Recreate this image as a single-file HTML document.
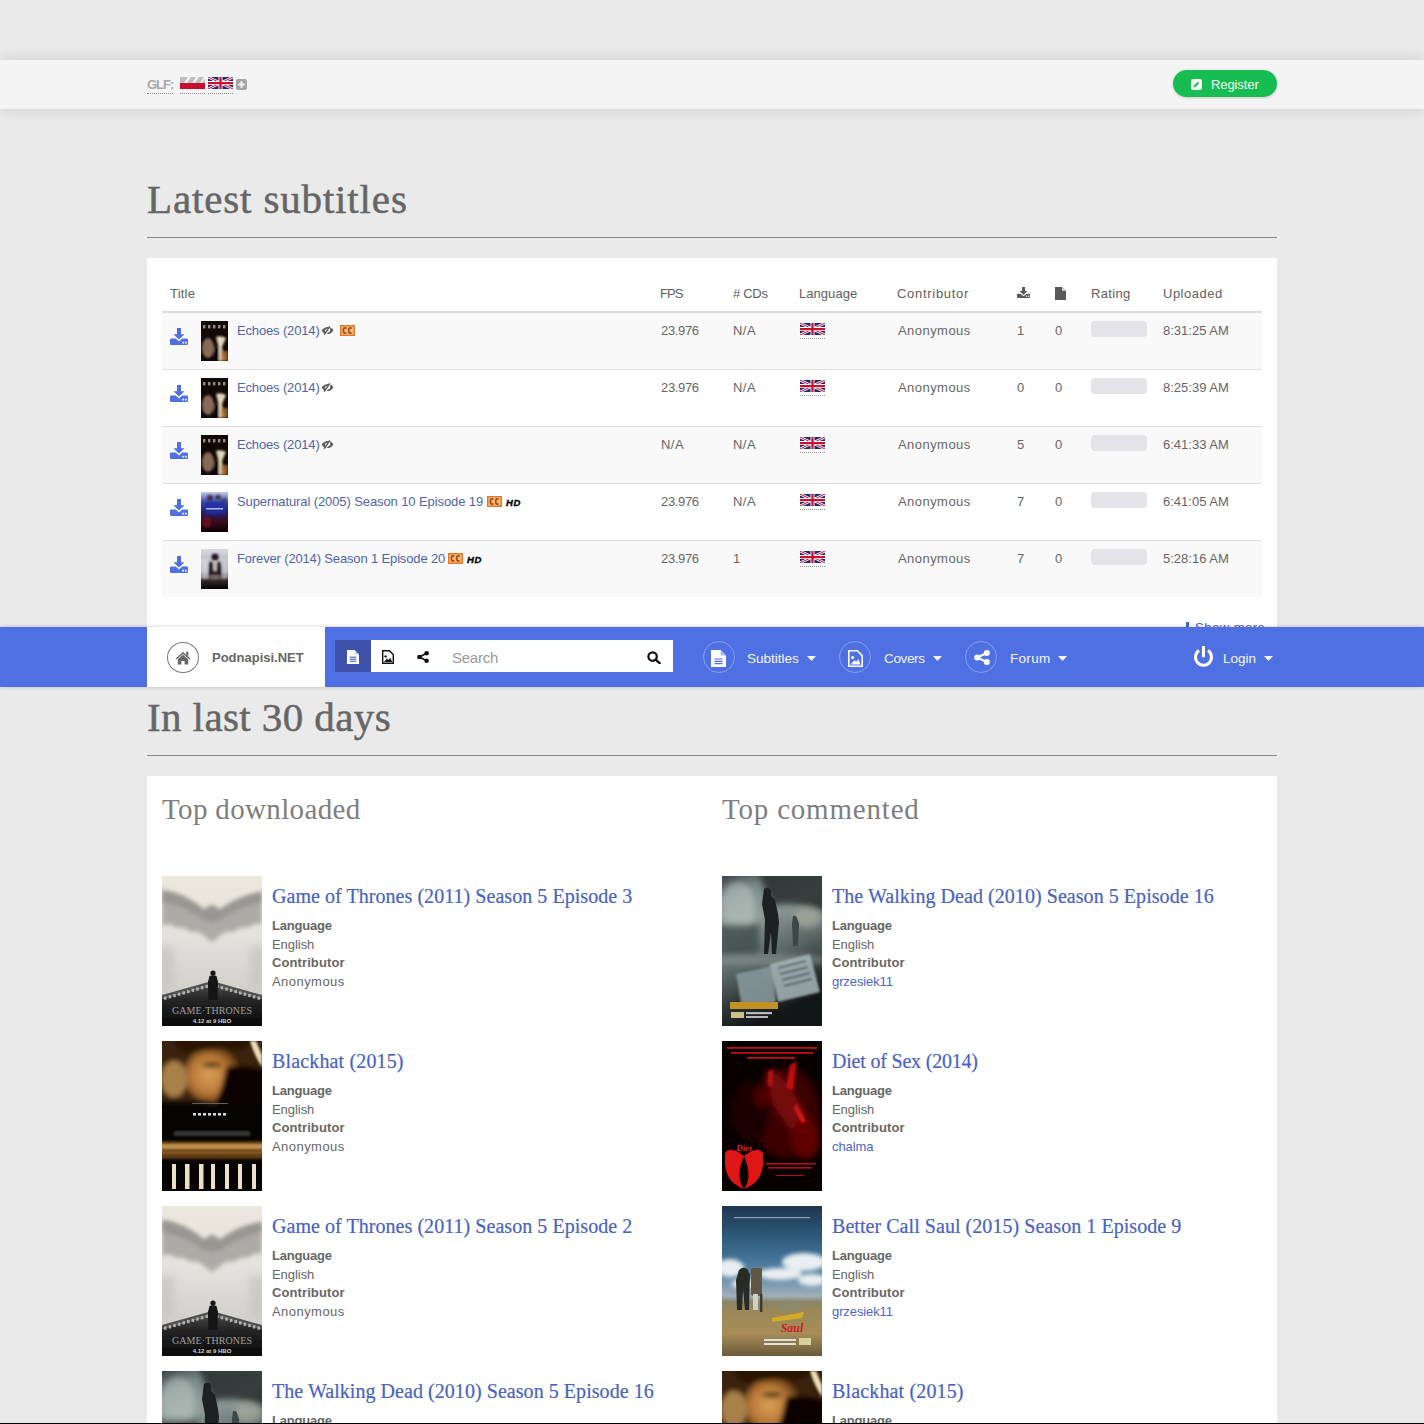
<!DOCTYPE html>
<html><head><meta charset="utf-8">
<style>
*{box-sizing:border-box}
html,body{margin:0;padding:0}
body{width:1424px;height:1424px;overflow:hidden;position:relative;background:#eaeaea;font-family:"Liberation Sans",sans-serif;font-size:13px;color:#666}
.abs{position:absolute}
.topbar{position:absolute;left:0;top:60px;width:1424px;height:49px;background:#f4f4f4;box-shadow:0 0 14px rgba(0,0,0,.13)}
.h1{position:absolute;left:147px;font-family:"Liberation Serif",serif;font-size:41px;line-height:41px;color:#666;white-space:nowrap;-webkit-text-stroke:0.5px #666}
.rule{position:absolute;left:147px;width:1130px;height:1px;background:#8a8a8a}
.panel{position:absolute;left:147px;width:1130px;background:#fff}
.t{position:absolute;white-space:nowrap;line-height:16px}
.lnk{color:#4f64ac}
.row{position:absolute;left:162px;width:1100px;height:56px}
.row.odd{background:#f9f9f9}
.bline{position:absolute;left:162px;width:1100px;height:1px;background:#ddd}
.nav{position:absolute;left:0;top:627px;width:1424px;height:60px;background:#4f70e2;box-shadow:0 0 4px rgba(0,0,0,.22)}
.h2{position:absolute;font-family:"Liberation Serif",serif;font-size:29px;line-height:29px;color:#7e7e7e;white-space:nowrap}
.it-title{position:absolute;font-family:"Liberation Serif",serif;font-size:20px;line-height:20px;color:#4862c2;white-space:nowrap;-webkit-text-stroke:0.2px #4862c2}
.lbl{position:absolute;white-space:nowrap;line-height:16px;font-size:13px}
.b{font-weight:bold;color:#666}
.poster{position:absolute;width:100px;height:150px;overflow:hidden}
.thumb{position:absolute;left:201px;width:27px;height:40px;overflow:hidden}
</style></head><body>


<!-- top bar -->
<div class="topbar"></div>
<div class="t" style="left:147px;top:77px;font-weight:bold;color:#a8a8a8;font-size:13px;letter-spacing:-1px">GLF:</div>
<div class="abs" style="left:147px;top:93px;width:26px;border-top:1px dotted #8a8a8a"></div>
<svg class="abs" style="left:180px;top:77px" width="25" height="12" viewBox="0 0 25 12">
<rect width="25" height="6" fill="#bdbdbd"/><rect y="6" width="25" height="6" fill="#c8102e"/>
<path d="M4 6 L8 0 H11 L7 6Z M12 6 L16 0 H19 L15 6Z M20 6 L24 0 H25 V1.5 L22 6Z" fill="#f4f4f4"/>
</svg>
<div class="abs" style="left:180px;top:93px;width:25px;border-top:1px dotted #8a8a8a"></div>
<svg class="abs" style="left:208px;top:77px" width="25" height="12" viewBox="0 0 50 24">
<rect width="50" height="24" fill="#1f2a6b"/>
<path d="M0 0L50 24M50 0L0 24" stroke="#fff" stroke-width="5"/>
<path d="M0 0L50 24M50 0L0 24" stroke="#c8102e" stroke-width="2"/>
<path d="M25 0V24M0 12H50" stroke="#fff" stroke-width="8"/>
<path d="M25 0V24M0 12H50" stroke="#c8102e" stroke-width="4.5"/>
</svg>
<div class="abs" style="left:208px;top:93px;width:25px;border-top:1px dotted #8a8a8a"></div>
<svg class="abs" style="left:236px;top:79px" width="11" height="11" viewBox="0 0 11 11">
<rect width="11" height="11" rx="2" fill="#a5a5a5"/><path d="M5.5 2.3V8.7M2.3 5.5H8.7" stroke="#f4f4f4" stroke-width="2"/>
</svg>
<div class="abs" style="left:1173px;top:70px;width:104px;height:27px;border-radius:14px;background:#17bd52;box-shadow:0 1px 3px rgba(0,0,0,.18)"></div>
<svg class="abs" style="left:1191px;top:79px" width="11" height="11" viewBox="0 0 11 11">
<rect width="11" height="11" rx="2" fill="#f4fff6"/><path d="M2.5 8.5 L3 6.6 L6.8 2.8 L8.2 4.2 L4.4 8 Z" fill="#17bd52"/>
</svg>
<div class="t" style="left:1211px;top:77px;color:#f0fff4;font-size:13px;letter-spacing:-0.1px">Register</div>


<div class="h1" style="top:179px;letter-spacing:0.85px">Latest subtitles</div>
<div class="rule" style="top:237px"></div>
<div class="panel" style="top:258px;height:420px"></div>
<div class="t" style="left:170px;top:286px;color:#606060;letter-spacing:0.2px">Title</div><div class="t" style="left:660px;top:286px;color:#606060;letter-spacing:-0.9px">FPS</div><div class="t" style="left:733px;top:286px;color:#606060;letter-spacing:-0.3px"># CDs</div><div class="t" style="left:799px;top:286px;color:#606060;letter-spacing:0.05px">Language</div><div class="t" style="left:897px;top:286px;color:#606060;letter-spacing:0.7px">Contributor</div><div class="t" style="left:1091px;top:286px;color:#606060;letter-spacing:0.35px">Rating</div><div class="t" style="left:1163px;top:286px;color:#606060;letter-spacing:0.5px">Uploaded</div><svg class="abs" style="left:1017px;top:287px" width="13" height="11" viewBox="0 0 13 11"><path d="M5 0h3v4h2.5L6.5 8 2.5 4H5z" fill="#5a5a5a"/><path d="M0 7.6q0-.8.8-.8h2.6L6.5 9.2l3.1-2.4h2.6q.8 0 .8.8V10.2q0 .8-.8.8H.8Q0 11 0 10.2z" fill="#5a5a5a"/><rect x="9" y="8.6" width="1.2" height="1.2" fill="#fff"/><rect x="10.9" y="8.6" width="1.2" height="1.2" fill="#fff"/></svg><svg class="abs" style="left:1055px;top:287px" width="11" height="13" viewBox="0 0 11 13"><path d="M0 0H7L11 4V13H0Z" fill="#5a5a5a"/><path d="M7 0V4H11" fill="#ccc"/></svg>
<div class="abs" style="left:162px;top:311px;width:1100px;height:2px;background:#ddd"></div>
<div class="row odd" style="top:313px"></div><svg class="abs" style="left:170px;top:328px" width="18" height="17" viewBox="0 0 18 17"><path d="M7 0h4v6.2h3.6L9 11.6 3.4 6.2H7z" fill="#4f70e2"/><path d="M0 11.6q0-1.2 1.2-1.2h4.6L9 13.6l3.2-3.2h4.6q1.2 0 1.2 1.2V15.8q0 1.2-1.2 1.2H1.2Q0 17 0 15.8z" fill="#4f70e2"/><rect x="12.3" y="13.8" width="1.7" height="1.7" fill="#fff"/><rect x="14.9" y="13.8" width="1.7" height="1.7" fill="#fff"/></svg><svg class="abs" style="left:201px;top:321px" width="27" height="40" viewBox="0 0 27 40"><defs><filter id="t201_321b" x="-30%" y="-30%" width="160%" height="160%"><feGaussianBlur stdDeviation="1.3"/></filter><filter id="t201_321c"><feGaussianBlur stdDeviation="0.5"/></filter></defs><rect width="27" height="40" fill="#120806"/><g filter="url(#t201_321b)"><ellipse cx="7" cy="27" rx="6" ry="10" fill="#9a7a68" opacity=".85"/><path d="M15 16 Q20 14 25 17 L21 26 Q22 33 24 40 L17 40 Q19 30 17 24Z" fill="#e0d8b8"/><rect x="20" y="30" width="7" height="10" fill="#b06a30" opacity=".8"/><rect x="13" y="26" width="5" height="14" fill="#080410"/></g><g filter="url(#t201_321c)" fill="#b8aca4" opacity=".8"><rect x="2" y="4" width="2.4" height="3.4"/><rect x="7" y="4" width="2.4" height="3.4"/><rect x="12" y="4" width="2.4" height="3.4"/><rect x="17" y="4" width="2.4" height="3.4"/><rect x="22" y="4" width="2.4" height="3.4"/></g></svg><div class="t lnk" style="left:237px;top:323px;letter-spacing:-0.15px">Echoes (2014)</div><svg class="abs" style="left:321px;top:326px" width="13" height="9" viewBox="0 0 13 9"><path d="M0.6 4.5 Q3.5 0.6 7.6 0.9 L6.6 2.4 Q4.4 2.6 3.6 4.5 Q3.8 5.8 4.6 6.6 L3.6 7.8 Q1.8 6.6 0.6 4.5Z" fill="#555"/><path d="M9.6 1.6 Q11.4 2.8 12.4 4.5 Q10 8.2 5.8 8.1 L6.8 6.7 Q9 6.3 9.4 4.2 Q9.4 3.4 9 3Z" fill="#555"/><path d="M3.2 8.6 L8.8 0.4" stroke="#555" stroke-width="1.5"/></svg><svg class="abs" style="left:340px;top:325px" width="15" height="11" viewBox="0 0 15 11"><rect x="0" y="0" width="15" height="11" fill="#e07a2a"/><rect x="1.4" y="1.4" width="12.2" height="8.2" fill="#f8b878"/><path d="M6.3 3.6 Q5.8 2.9 4.9 2.9 Q3.4 2.9 3.4 5.5 Q3.4 8.1 4.9 8.1 Q5.8 8.1 6.3 7.4 M11.6 3.6 Q11.1 2.9 10.2 2.9 Q8.7 2.9 8.7 5.5 Q8.7 8.1 10.2 8.1 Q11.1 8.1 11.6 7.4" fill="none" stroke="#a04e18" stroke-width="1.7"/></svg><div class="t" style="left:661px;top:323px;letter-spacing:-0.35px">23.976</div><div class="t" style="left:733px;top:323px;letter-spacing:0.45px">N/A</div><svg class="abs" style="left:800px;top:323px" width="25" height="12" viewBox="0 0 50 24"><rect width="50" height="24" fill="#1f2a6b"/><path d="M0 0L50 24M50 0L0 24" stroke="#fff" stroke-width="5"/><path d="M0 0L50 24M50 0L0 24" stroke="#c8102e" stroke-width="2"/><path d="M25 0V24M0 12H50" stroke="#fff" stroke-width="8"/><path d="M25 0V24M0 12H50" stroke="#c8102e" stroke-width="4.5"/></svg><div class="abs" style="left:800px;top:338px;width:25px;border-top:1px dotted #999"></div><div class="t" style="left:898px;top:323px;letter-spacing:0.45px">Anonymous</div><div class="t" style="left:1017px;top:323px">1</div><div class="t" style="left:1055px;top:323px">0</div><div class="abs" style="left:1091px;top:321px;width:56px;height:16px;border-radius:4px;background:#e4e4e8"></div><div class="t" style="left:1163px;top:323px">8:31:25 AM</div>
<div class="bline" style="top:369px"></div><svg class="abs" style="left:170px;top:385px" width="18" height="17" viewBox="0 0 18 17"><path d="M7 0h4v6.2h3.6L9 11.6 3.4 6.2H7z" fill="#4f70e2"/><path d="M0 11.6q0-1.2 1.2-1.2h4.6L9 13.6l3.2-3.2h4.6q1.2 0 1.2 1.2V15.8q0 1.2-1.2 1.2H1.2Q0 17 0 15.8z" fill="#4f70e2"/><rect x="12.3" y="13.8" width="1.7" height="1.7" fill="#fff"/><rect x="14.9" y="13.8" width="1.7" height="1.7" fill="#fff"/></svg><svg class="abs" style="left:201px;top:378px" width="27" height="40" viewBox="0 0 27 40"><defs><filter id="t201_378b" x="-30%" y="-30%" width="160%" height="160%"><feGaussianBlur stdDeviation="1.3"/></filter><filter id="t201_378c"><feGaussianBlur stdDeviation="0.5"/></filter></defs><rect width="27" height="40" fill="#120806"/><g filter="url(#t201_378b)"><ellipse cx="7" cy="27" rx="6" ry="10" fill="#9a7a68" opacity=".85"/><path d="M15 16 Q20 14 25 17 L21 26 Q22 33 24 40 L17 40 Q19 30 17 24Z" fill="#e0d8b8"/><rect x="20" y="30" width="7" height="10" fill="#b06a30" opacity=".8"/><rect x="13" y="26" width="5" height="14" fill="#080410"/></g><g filter="url(#t201_378c)" fill="#b8aca4" opacity=".8"><rect x="2" y="4" width="2.4" height="3.4"/><rect x="7" y="4" width="2.4" height="3.4"/><rect x="12" y="4" width="2.4" height="3.4"/><rect x="17" y="4" width="2.4" height="3.4"/><rect x="22" y="4" width="2.4" height="3.4"/></g></svg><div class="t lnk" style="left:237px;top:380px;letter-spacing:-0.15px">Echoes (2014)</div><svg class="abs" style="left:321px;top:383px" width="13" height="9" viewBox="0 0 13 9"><path d="M0.6 4.5 Q3.5 0.6 7.6 0.9 L6.6 2.4 Q4.4 2.6 3.6 4.5 Q3.8 5.8 4.6 6.6 L3.6 7.8 Q1.8 6.6 0.6 4.5Z" fill="#555"/><path d="M9.6 1.6 Q11.4 2.8 12.4 4.5 Q10 8.2 5.8 8.1 L6.8 6.7 Q9 6.3 9.4 4.2 Q9.4 3.4 9 3Z" fill="#555"/><path d="M3.2 8.6 L8.8 0.4" stroke="#555" stroke-width="1.5"/></svg><div class="t" style="left:661px;top:380px;letter-spacing:-0.35px">23.976</div><div class="t" style="left:733px;top:380px;letter-spacing:0.45px">N/A</div><svg class="abs" style="left:800px;top:380px" width="25" height="12" viewBox="0 0 50 24"><rect width="50" height="24" fill="#1f2a6b"/><path d="M0 0L50 24M50 0L0 24" stroke="#fff" stroke-width="5"/><path d="M0 0L50 24M50 0L0 24" stroke="#c8102e" stroke-width="2"/><path d="M25 0V24M0 12H50" stroke="#fff" stroke-width="8"/><path d="M25 0V24M0 12H50" stroke="#c8102e" stroke-width="4.5"/></svg><div class="abs" style="left:800px;top:395px;width:25px;border-top:1px dotted #999"></div><div class="t" style="left:898px;top:380px;letter-spacing:0.45px">Anonymous</div><div class="t" style="left:1017px;top:380px">0</div><div class="t" style="left:1055px;top:380px">0</div><div class="abs" style="left:1091px;top:378px;width:56px;height:16px;border-radius:4px;background:#e4e4e8"></div><div class="t" style="left:1163px;top:380px">8:25:39 AM</div>
<div class="bline" style="top:426px"></div><div class="row odd" style="top:427px"></div><svg class="abs" style="left:170px;top:442px" width="18" height="17" viewBox="0 0 18 17"><path d="M7 0h4v6.2h3.6L9 11.6 3.4 6.2H7z" fill="#4f70e2"/><path d="M0 11.6q0-1.2 1.2-1.2h4.6L9 13.6l3.2-3.2h4.6q1.2 0 1.2 1.2V15.8q0 1.2-1.2 1.2H1.2Q0 17 0 15.8z" fill="#4f70e2"/><rect x="12.3" y="13.8" width="1.7" height="1.7" fill="#fff"/><rect x="14.9" y="13.8" width="1.7" height="1.7" fill="#fff"/></svg><svg class="abs" style="left:201px;top:435px" width="27" height="40" viewBox="0 0 27 40"><defs><filter id="t201_435b" x="-30%" y="-30%" width="160%" height="160%"><feGaussianBlur stdDeviation="1.3"/></filter><filter id="t201_435c"><feGaussianBlur stdDeviation="0.5"/></filter></defs><rect width="27" height="40" fill="#120806"/><g filter="url(#t201_435b)"><ellipse cx="7" cy="27" rx="6" ry="10" fill="#9a7a68" opacity=".85"/><path d="M15 16 Q20 14 25 17 L21 26 Q22 33 24 40 L17 40 Q19 30 17 24Z" fill="#e0d8b8"/><rect x="20" y="30" width="7" height="10" fill="#b06a30" opacity=".8"/><rect x="13" y="26" width="5" height="14" fill="#080410"/></g><g filter="url(#t201_435c)" fill="#b8aca4" opacity=".8"><rect x="2" y="4" width="2.4" height="3.4"/><rect x="7" y="4" width="2.4" height="3.4"/><rect x="12" y="4" width="2.4" height="3.4"/><rect x="17" y="4" width="2.4" height="3.4"/><rect x="22" y="4" width="2.4" height="3.4"/></g></svg><div class="t lnk" style="left:237px;top:437px;letter-spacing:-0.15px">Echoes (2014)</div><svg class="abs" style="left:321px;top:440px" width="13" height="9" viewBox="0 0 13 9"><path d="M0.6 4.5 Q3.5 0.6 7.6 0.9 L6.6 2.4 Q4.4 2.6 3.6 4.5 Q3.8 5.8 4.6 6.6 L3.6 7.8 Q1.8 6.6 0.6 4.5Z" fill="#555"/><path d="M9.6 1.6 Q11.4 2.8 12.4 4.5 Q10 8.2 5.8 8.1 L6.8 6.7 Q9 6.3 9.4 4.2 Q9.4 3.4 9 3Z" fill="#555"/><path d="M3.2 8.6 L8.8 0.4" stroke="#555" stroke-width="1.5"/></svg><div class="t" style="left:661px;top:437px;letter-spacing:0.45px">N/A</div><div class="t" style="left:733px;top:437px;letter-spacing:0.45px">N/A</div><svg class="abs" style="left:800px;top:437px" width="25" height="12" viewBox="0 0 50 24"><rect width="50" height="24" fill="#1f2a6b"/><path d="M0 0L50 24M50 0L0 24" stroke="#fff" stroke-width="5"/><path d="M0 0L50 24M50 0L0 24" stroke="#c8102e" stroke-width="2"/><path d="M25 0V24M0 12H50" stroke="#fff" stroke-width="8"/><path d="M25 0V24M0 12H50" stroke="#c8102e" stroke-width="4.5"/></svg><div class="abs" style="left:800px;top:452px;width:25px;border-top:1px dotted #999"></div><div class="t" style="left:898px;top:437px;letter-spacing:0.45px">Anonymous</div><div class="t" style="left:1017px;top:437px">5</div><div class="t" style="left:1055px;top:437px">0</div><div class="abs" style="left:1091px;top:435px;width:56px;height:16px;border-radius:4px;background:#e4e4e8"></div><div class="t" style="left:1163px;top:437px">6:41:33 AM</div>
<div class="bline" style="top:483px"></div><svg class="abs" style="left:170px;top:499px" width="18" height="17" viewBox="0 0 18 17"><path d="M7 0h4v6.2h3.6L9 11.6 3.4 6.2H7z" fill="#4f70e2"/><path d="M0 11.6q0-1.2 1.2-1.2h4.6L9 13.6l3.2-3.2h4.6q1.2 0 1.2 1.2V15.8q0 1.2-1.2 1.2H1.2Q0 17 0 15.8z" fill="#4f70e2"/><rect x="12.3" y="13.8" width="1.7" height="1.7" fill="#fff"/><rect x="14.9" y="13.8" width="1.7" height="1.7" fill="#fff"/></svg><svg class="abs" style="left:201px;top:492px" width="27" height="40" viewBox="0 0 27 40"><defs><filter id="t201_492b" x="-30%" y="-30%" width="160%" height="160%"><feGaussianBlur stdDeviation="1.3"/></filter><filter id="t201_492c"><feGaussianBlur stdDeviation="0.5"/></filter><linearGradient id="t201_492g" x1="0" y1="0" x2="0" y2="1"><stop offset="0" stop-color="#c8c8e8"/><stop offset=".25" stop-color="#3a4ab0"/><stop offset=".5" stop-color="#1e2070"/><stop offset=".75" stop-color="#3a0a18"/><stop offset="1" stop-color="#080204"/></linearGradient></defs><rect width="27" height="40" fill="url(#t201_492g)"/><g filter="url(#t201_492b)"><circle cx="9" cy="6" r="3" fill="#3a2a50"/><circle cx="17" cy="5.5" r="2.8" fill="#3a3a50"/><circle cx="23" cy="9" r="2.4" fill="#404060"/><rect x="4" y="10" width="20" height="12" fill="#2030a0" opacity=".8"/><ellipse cx="6" cy="30" rx="4" ry="6" fill="#701020" opacity=".8"/></g><rect x="5" y="16" width="17" height="1.5" fill="#b0b8e0" filter="url(#t201_492c)"/></svg><div class="t lnk" style="left:237px;top:494px;letter-spacing:-0.1px">Supernatural (2005) Season 10 Episode 19</div><svg class="abs" style="left:487px;top:496px" width="15" height="11" viewBox="0 0 15 11"><rect x="0" y="0" width="15" height="11" fill="#e07a2a"/><rect x="1.4" y="1.4" width="12.2" height="8.2" fill="#f8b878"/><path d="M6.3 3.6 Q5.8 2.9 4.9 2.9 Q3.4 2.9 3.4 5.5 Q3.4 8.1 4.9 8.1 Q5.8 8.1 6.3 7.4 M11.6 3.6 Q11.1 2.9 10.2 2.9 Q8.7 2.9 8.7 5.5 Q8.7 8.1 10.2 8.1 Q11.1 8.1 11.6 7.4" fill="none" stroke="#a04e18" stroke-width="1.7"/></svg><div class="t" style="left:506px;top:498px;font-size:9.5px;line-height:10px;font-weight:bold;font-style:italic;color:#000;letter-spacing:0.7px;-webkit-text-stroke:0.35px #000">HD</div><div class="t" style="left:661px;top:494px;letter-spacing:-0.35px">23.976</div><div class="t" style="left:733px;top:494px;letter-spacing:0.45px">N/A</div><svg class="abs" style="left:800px;top:494px" width="25" height="12" viewBox="0 0 50 24"><rect width="50" height="24" fill="#1f2a6b"/><path d="M0 0L50 24M50 0L0 24" stroke="#fff" stroke-width="5"/><path d="M0 0L50 24M50 0L0 24" stroke="#c8102e" stroke-width="2"/><path d="M25 0V24M0 12H50" stroke="#fff" stroke-width="8"/><path d="M25 0V24M0 12H50" stroke="#c8102e" stroke-width="4.5"/></svg><div class="abs" style="left:800px;top:509px;width:25px;border-top:1px dotted #999"></div><div class="t" style="left:898px;top:494px;letter-spacing:0.45px">Anonymous</div><div class="t" style="left:1017px;top:494px">7</div><div class="t" style="left:1055px;top:494px">0</div><div class="abs" style="left:1091px;top:492px;width:56px;height:16px;border-radius:4px;background:#e4e4e8"></div><div class="t" style="left:1163px;top:494px">6:41:05 AM</div>
<div class="bline" style="top:540px"></div><div class="row odd" style="top:541px"></div><svg class="abs" style="left:170px;top:556px" width="18" height="17" viewBox="0 0 18 17"><path d="M7 0h4v6.2h3.6L9 11.6 3.4 6.2H7z" fill="#4f70e2"/><path d="M0 11.6q0-1.2 1.2-1.2h4.6L9 13.6l3.2-3.2h4.6q1.2 0 1.2 1.2V15.8q0 1.2-1.2 1.2H1.2Q0 17 0 15.8z" fill="#4f70e2"/><rect x="12.3" y="13.8" width="1.7" height="1.7" fill="#fff"/><rect x="14.9" y="13.8" width="1.7" height="1.7" fill="#fff"/></svg><svg class="abs" style="left:201px;top:549px" width="27" height="40" viewBox="0 0 27 40"><defs><filter id="t201_549b" x="-30%" y="-30%" width="160%" height="160%"><feGaussianBlur stdDeviation="1.3"/></filter><filter id="t201_549c"><feGaussianBlur stdDeviation="0.5"/></filter><linearGradient id="t201_549g" x1="0" y1="0" x2="0" y2="1"><stop offset="0" stop-color="#d8d8e0"/><stop offset=".55" stop-color="#a8a8b0"/><stop offset=".75" stop-color="#3a3030"/><stop offset="1" stop-color="#050303"/></linearGradient></defs><rect width="27" height="40" fill="url(#t201_549g)"/><g filter="url(#t201_549b)"><rect x="0" y="10" width="7" height="20" fill="#e0e0e8" opacity=".6"/><rect x="20" y="10" width="7" height="20" fill="#d8d8e0" opacity=".5"/><circle cx="14" cy="8" r="3.6" fill="#201828"/><path d="M8 13 L20 13 L21 30 L7 30Z" fill="#221a22"/><path d="M12 13 L16 13 L15.5 22 L12.5 22Z" fill="#c8c0c0"/><ellipse cx="14" cy="28" rx="7" ry="2.6" fill="#a89890" opacity=".6"/></g></svg><div class="t lnk" style="left:237px;top:551px;letter-spacing:-0.15px">Forever (2014) Season 1 Episode 20</div><svg class="abs" style="left:448px;top:553px" width="15" height="11" viewBox="0 0 15 11"><rect x="0" y="0" width="15" height="11" fill="#e07a2a"/><rect x="1.4" y="1.4" width="12.2" height="8.2" fill="#f8b878"/><path d="M6.3 3.6 Q5.8 2.9 4.9 2.9 Q3.4 2.9 3.4 5.5 Q3.4 8.1 4.9 8.1 Q5.8 8.1 6.3 7.4 M11.6 3.6 Q11.1 2.9 10.2 2.9 Q8.7 2.9 8.7 5.5 Q8.7 8.1 10.2 8.1 Q11.1 8.1 11.6 7.4" fill="none" stroke="#a04e18" stroke-width="1.7"/></svg><div class="t" style="left:467px;top:555px;font-size:9.5px;line-height:10px;font-weight:bold;font-style:italic;color:#000;letter-spacing:0.7px;-webkit-text-stroke:0.35px #000">HD</div><div class="t" style="left:661px;top:551px;letter-spacing:-0.35px">23.976</div><div class="t" style="left:733px;top:551px;letter-spacing:0.45px">1</div><svg class="abs" style="left:800px;top:551px" width="25" height="12" viewBox="0 0 50 24"><rect width="50" height="24" fill="#1f2a6b"/><path d="M0 0L50 24M50 0L0 24" stroke="#fff" stroke-width="5"/><path d="M0 0L50 24M50 0L0 24" stroke="#c8102e" stroke-width="2"/><path d="M25 0V24M0 12H50" stroke="#fff" stroke-width="8"/><path d="M25 0V24M0 12H50" stroke="#c8102e" stroke-width="4.5"/></svg><div class="abs" style="left:800px;top:566px;width:25px;border-top:1px dotted #999"></div><div class="t" style="left:898px;top:551px;letter-spacing:0.45px">Anonymous</div><div class="t" style="left:1017px;top:551px">7</div><div class="t" style="left:1055px;top:551px">0</div><div class="abs" style="left:1091px;top:549px;width:56px;height:16px;border-radius:4px;background:#e4e4e8"></div><div class="t" style="left:1163px;top:551px">5:28:16 AM</div>
<div class="abs" style="left:1186px;top:622px;width:3px;height:8px;background:#4a66c8"></div><div class="t lnk" style="left:1195px;top:620px;font-size:13px;letter-spacing:0.5px">Show more</div>
<div class="h1" style="top:697px;letter-spacing:0.4px">In last 30 days</div>
<div class="rule" style="top:755px"></div>
<div class="panel" style="top:776px;height:647px"></div>
<div class="h2" style="left:162px;top:795px;letter-spacing:0.35px">Top downloaded</div><div class="h2" style="left:722px;top:795px;letter-spacing:0.8px">Top commented</div>
<div class="poster" style="left:162px;top:876px"><svg width="100" height="150" viewBox="0 0 100 150">
<defs>
<linearGradient id="p1bg" x1="0" y1="0" x2="0" y2="1"><stop offset="0" stop-color="#ebe8de"/><stop offset=".4" stop-color="#e4e2dc"/><stop offset=".7" stop-color="#d4d3ce"/><stop offset="1" stop-color="#c0c0bc"/></linearGradient>
<linearGradient id="p1dk" x1="0" y1="0" x2="0" y2="1"><stop offset="0" stop-color="#484848"/><stop offset=".35" stop-color="#262626"/><stop offset="1" stop-color="#080808"/></linearGradient>
<filter id="p1b" x="-20%" y="-20%" width="140%" height="140%"><feGaussianBlur stdDeviation="2.2"/></filter>
<filter id="p1b3" x="-20%" y="-20%" width="140%" height="140%"><feGaussianBlur stdDeviation="4"/></filter>
<filter id="p1b2"><feGaussianBlur stdDeviation="0.45"/></filter>
</defs>
<rect width="100" height="150" fill="url(#p1bg)"/>
<g filter="url(#p1b)" fill="#a4a29c" opacity=".85">
<path d="M0 14 Q24 18 42 34 L47 30 L50 28 L53 30 L58 34 Q76 20 100 16 L100 48 Q92 46 86 52 Q78 50 72 56 Q64 54 58 60 L53 64 L50 66 L47 64 L42 60 Q36 54 28 56 Q22 50 14 52 Q8 46 0 50Z"/>
</g>
<g filter="url(#p1b)" fill="#8a8884" opacity=".6"><path d="M0 14 Q24 18 42 34 L50 30 L58 34 Q76 20 100 16 L100 26 Q78 30 58 44 L50 46 L42 44 Q24 30 0 26Z"/></g>
<g filter="url(#p1b3)" fill="#c4c3be" opacity=".7"><rect x="-4" y="70" width="16" height="40"/><rect x="88" y="70" width="16" height="40"/></g>
<g filter="url(#p1b2)">
<path d="M0 123 L50 109 L100 123 L100 150 L0 150Z" fill="url(#p1dk)"/>
<path d="M0 119 L50 105 L100 119 L100 123 L50 109 L0 123Z" fill="#505050"/>
<g fill="#b0b0b0"><rect x="2.0" y="120.5" width="2.6" height="3.2"/><rect x="6.6" y="119.2" width="2.6" height="3.2"/><rect x="11.2" y="117.9" width="2.6" height="3.2"/><rect x="15.8" y="116.6" width="2.6" height="3.2"/><rect x="20.4" y="115.3" width="2.6" height="3.2"/><rect x="25.0" y="114.0" width="2.6" height="3.2"/><rect x="29.6" y="112.7" width="2.6" height="3.2"/><rect x="34.2" y="111.4" width="2.6" height="3.2"/><rect x="38.8" y="110.1" width="2.6" height="3.2"/><rect x="43.4" y="108.8" width="2.6" height="3.2"/><rect x="95.4" y="120.5" width="2.6" height="3.2"/><rect x="90.8" y="119.2" width="2.6" height="3.2"/><rect x="86.2" y="117.9" width="2.6" height="3.2"/><rect x="81.6" y="116.6" width="2.6" height="3.2"/><rect x="77.0" y="115.3" width="2.6" height="3.2"/><rect x="72.4" y="114.0" width="2.6" height="3.2"/><rect x="67.8" y="112.7" width="2.6" height="3.2"/><rect x="63.2" y="111.4" width="2.6" height="3.2"/><rect x="58.6" y="110.1" width="2.6" height="3.2"/><rect x="54.0" y="108.8" width="2.6" height="3.2"/></g>
<circle cx="51" cy="97" r="2.6" fill="#141414"/>
<path d="M47.5 100 Q51 98.5 54.5 100 L56 106 L55.5 124 L46.5 124 L46 106Z" fill="#141414"/>
</g>
<text x="50" y="138" font-family="Liberation Serif" font-size="10" fill="#a0a0a0" text-anchor="middle" letter-spacing="0.1">GAME·THRONES</text>
<text x="50" y="147" font-family="Liberation Sans" font-weight="bold" font-size="6" fill="#d0d0d0" text-anchor="middle">4.12 at 9 HBO</text>
</svg></div><div class="it-title" style="left:272px;top:886px;letter-spacing:0.05px">Game of Thrones (2011) Season 5 Episode 3</div><div class="lbl b" style="left:272px;top:918px;letter-spacing:-0.2px">Language</div><div class="lbl" style="left:272px;top:937px;letter-spacing:-0.05px">English</div><div class="lbl b" style="left:272px;top:955px;letter-spacing:0.1px">Contributor</div><div class="lbl" style="left:272px;top:974px;color:#666;letter-spacing:0.45px">Anonymous</div>
<div class="poster" style="left:162px;top:1041px"><svg width="100" height="150" viewBox="0 0 100 150">
<defs>
<filter id="p2b" x="-20%" y="-20%" width="140%" height="140%"><feGaussianBlur stdDeviation="2.4"/></filter>
<filter id="p2b1" x="-20%" y="-20%" width="140%" height="140%"><feGaussianBlur stdDeviation="1.2"/></filter>
<filter id="p2b2"><feGaussianBlur stdDeviation="0.5"/></filter>
<radialGradient id="p2f" cx=".45" cy=".5" r=".55"><stop offset="0" stop-color="#d8a058"/><stop offset=".6" stop-color="#b87838"/><stop offset="1" stop-color="#5a3410"/></radialGradient>
</defs>
<rect width="100" height="150" fill="#060403"/>
<g filter="url(#p2b)">
<rect x="-5" y="-5" width="110" height="66" fill="#3a2208"/>
<ellipse cx="50" cy="34" rx="28" ry="28" fill="url(#p2f)"/>
<ellipse cx="12" cy="38" rx="13" ry="18" fill="#a88048"/>
<path d="M10 -5 H95 Q90 8 70 10 Q50 6 30 12 Q15 14 10 -5Z" fill="#2a1606"/>
<path d="M64 26 Q82 22 105 30 L105 64 L52 64 Q60 50 64 26Z" fill="#0a0604"/>
<ellipse cx="50" cy="24" rx="10" ry="2.5" fill="#4a2a10"/>
</g>
<path d="M88 0 H94 L100 14 V26 Q92 14 88 0Z" fill="#e8dcb8" filter="url(#p2b1)"/>
<g fill="#d8d8d8"><rect x="31" y="72" width="3" height="2.6"/><rect x="36" y="72" width="3" height="2.6"/><rect x="41" y="72" width="3" height="2.6"/><rect x="46" y="72" width="3" height="2.6"/><rect x="51" y="72" width="3" height="2.6"/><rect x="56" y="72" width="3" height="2.6"/><rect x="61" y="72" width="3" height="2.6"/></g>
<rect x="30" y="62" width="36" height="1" fill="#606060"/>
<g filter="url(#p2b1)"><rect x="12" y="90" width="76" height="5" fill="#353535"/></g>
<g filter="url(#p2b1)"><rect x="-5" y="100" width="110" height="18" fill="#5a3812"/><rect x="-5" y="103" width="110" height="5" fill="#c09048"/><rect x="-5" y="110" width="110" height="3" fill="#8a5a20"/></g>
<g fill="#ece0c4" filter="url(#p2b2)"><rect x="10" y="123" width="4" height="25"/><rect x="23" y="123" width="4.5" height="25"/><rect x="37" y="123" width="4.5" height="25"/><rect x="49" y="123" width="4" height="25"/><rect x="63" y="123" width="4" height="25"/><rect x="76" y="123" width="4" height="25"/><rect x="90" y="123" width="4" height="25"/></g>
</svg></div><div class="it-title" style="left:272px;top:1051px;letter-spacing:0.15px">Blackhat (2015)</div><div class="lbl b" style="left:272px;top:1083px;letter-spacing:-0.2px">Language</div><div class="lbl" style="left:272px;top:1102px;letter-spacing:-0.05px">English</div><div class="lbl b" style="left:272px;top:1120px;letter-spacing:0.1px">Contributor</div><div class="lbl" style="left:272px;top:1139px;color:#666;letter-spacing:0.45px">Anonymous</div>
<div class="poster" style="left:162px;top:1206px"><svg width="100" height="150" viewBox="0 0 100 150">
<defs>
<linearGradient id="p3bg" x1="0" y1="0" x2="0" y2="1"><stop offset="0" stop-color="#ebe8de"/><stop offset=".4" stop-color="#e4e2dc"/><stop offset=".7" stop-color="#d4d3ce"/><stop offset="1" stop-color="#c0c0bc"/></linearGradient>
<linearGradient id="p3dk" x1="0" y1="0" x2="0" y2="1"><stop offset="0" stop-color="#484848"/><stop offset=".35" stop-color="#262626"/><stop offset="1" stop-color="#080808"/></linearGradient>
<filter id="p3b" x="-20%" y="-20%" width="140%" height="140%"><feGaussianBlur stdDeviation="2.2"/></filter>
<filter id="p3b3" x="-20%" y="-20%" width="140%" height="140%"><feGaussianBlur stdDeviation="4"/></filter>
<filter id="p3b2"><feGaussianBlur stdDeviation="0.45"/></filter>
</defs>
<rect width="100" height="150" fill="url(#p3bg)"/>
<g filter="url(#p3b)" fill="#a4a29c" opacity=".85">
<path d="M0 14 Q24 18 42 34 L47 30 L50 28 L53 30 L58 34 Q76 20 100 16 L100 48 Q92 46 86 52 Q78 50 72 56 Q64 54 58 60 L53 64 L50 66 L47 64 L42 60 Q36 54 28 56 Q22 50 14 52 Q8 46 0 50Z"/>
</g>
<g filter="url(#p3b)" fill="#8a8884" opacity=".6"><path d="M0 14 Q24 18 42 34 L50 30 L58 34 Q76 20 100 16 L100 26 Q78 30 58 44 L50 46 L42 44 Q24 30 0 26Z"/></g>
<g filter="url(#p3b3)" fill="#c4c3be" opacity=".7"><rect x="-4" y="70" width="16" height="40"/><rect x="88" y="70" width="16" height="40"/></g>
<g filter="url(#p3b2)">
<path d="M0 123 L50 109 L100 123 L100 150 L0 150Z" fill="url(#p3dk)"/>
<path d="M0 119 L50 105 L100 119 L100 123 L50 109 L0 123Z" fill="#505050"/>
<g fill="#b0b0b0"><rect x="2.0" y="120.5" width="2.6" height="3.2"/><rect x="6.6" y="119.2" width="2.6" height="3.2"/><rect x="11.2" y="117.9" width="2.6" height="3.2"/><rect x="15.8" y="116.6" width="2.6" height="3.2"/><rect x="20.4" y="115.3" width="2.6" height="3.2"/><rect x="25.0" y="114.0" width="2.6" height="3.2"/><rect x="29.6" y="112.7" width="2.6" height="3.2"/><rect x="34.2" y="111.4" width="2.6" height="3.2"/><rect x="38.8" y="110.1" width="2.6" height="3.2"/><rect x="43.4" y="108.8" width="2.6" height="3.2"/><rect x="95.4" y="120.5" width="2.6" height="3.2"/><rect x="90.8" y="119.2" width="2.6" height="3.2"/><rect x="86.2" y="117.9" width="2.6" height="3.2"/><rect x="81.6" y="116.6" width="2.6" height="3.2"/><rect x="77.0" y="115.3" width="2.6" height="3.2"/><rect x="72.4" y="114.0" width="2.6" height="3.2"/><rect x="67.8" y="112.7" width="2.6" height="3.2"/><rect x="63.2" y="111.4" width="2.6" height="3.2"/><rect x="58.6" y="110.1" width="2.6" height="3.2"/><rect x="54.0" y="108.8" width="2.6" height="3.2"/></g>
<circle cx="51" cy="97" r="2.6" fill="#141414"/>
<path d="M47.5 100 Q51 98.5 54.5 100 L56 106 L55.5 124 L46.5 124 L46 106Z" fill="#141414"/>
</g>
<text x="50" y="138" font-family="Liberation Serif" font-size="10" fill="#a0a0a0" text-anchor="middle" letter-spacing="0.1">GAME·THRONES</text>
<text x="50" y="147" font-family="Liberation Sans" font-weight="bold" font-size="6" fill="#d0d0d0" text-anchor="middle">4.12 at 9 HBO</text>
</svg></div><div class="it-title" style="left:272px;top:1216px;letter-spacing:0.05px">Game of Thrones (2011) Season 5 Episode 2</div><div class="lbl b" style="left:272px;top:1248px;letter-spacing:-0.2px">Language</div><div class="lbl" style="left:272px;top:1267px;letter-spacing:-0.05px">English</div><div class="lbl b" style="left:272px;top:1285px;letter-spacing:0.1px">Contributor</div><div class="lbl" style="left:272px;top:1304px;color:#666;letter-spacing:0.45px">Anonymous</div>
<div class="poster" style="left:162px;top:1371px"><svg width="100" height="150" viewBox="0 0 100 150">
<defs>
<linearGradient id="p4s" x1="0" y1="0" x2="0.3" y2="1"><stop offset="0" stop-color="#3a4646"/><stop offset=".15" stop-color="#7a8886"/><stop offset=".35" stop-color="#909c98"/><stop offset=".5" stop-color="#707c7a"/><stop offset=".62" stop-color="#5a6664"/><stop offset=".82" stop-color="#2e3636"/><stop offset="1" stop-color="#121616"/></linearGradient>
<filter id="p4b" x="-20%" y="-20%" width="140%" height="140%"><feGaussianBlur stdDeviation="3"/></filter>
<filter id="p4b1" x="-20%" y="-20%" width="140%" height="140%"><feGaussianBlur stdDeviation="1.2"/></filter>
<filter id="p4b2"><feGaussianBlur stdDeviation="0.6"/></filter>
</defs>
<rect width="100" height="150" fill="url(#p4s)"/>
<g filter="url(#p4b)">
<path d="M35 -5 H105 V38 Q75 24 50 30Z" fill="#1e2828" opacity=".8"/>
<ellipse cx="16" cy="30" rx="18" ry="24" fill="#c0ccc8" opacity=".55"/>
<ellipse cx="86" cy="42" rx="14" ry="10" fill="#c8ccb8" opacity=".45"/>
<rect x="-5" y="48" width="42" height="32" fill="#3a4644" opacity=".75"/>
<ellipse cx="50" cy="84" rx="60" ry="6" fill="#8a9694" opacity=".6"/>
</g>
<g filter="url(#p4b2)">
<path d="M42 13 Q46 10 49 14 L49 20 L53 24 L56 38 L57 46 L54 78 L50 78 L49 56 L46 78 L42 78 L43 44 L40 28Z" fill="#1a2020"/>
<path d="M71 40 Q74 39 75 42 L77 48 L76 70 L71 70 L70 48Z" fill="#3e4644"/>
</g>
<g filter="url(#p4b1)" opacity=".85">
<path d="M14 98 L50 90 L54 126 L20 132Z" fill="#8a9ca0"/>
<path d="M48 88 L88 78 L98 116 L56 126Z" fill="#a6b6b8"/>
<path d="M56 92 L84 85 M58 98 L86 91 M60 104 L88 97 M62 110 L90 103" stroke="#404a4c" stroke-width="1.4"/>
</g>
<rect x="8" y="126" width="48" height="7" fill="#c09228" filter="url(#p4b2)"/>
<rect x="9" y="136" width="13" height="6" fill="#d0c088"/>
<rect x="24" y="136" width="26" height="2.2" fill="#b8b8b8"/><rect x="24" y="140" width="22" height="2" fill="#b8b8b8"/>
</svg></div><div class="it-title" style="left:272px;top:1381px;letter-spacing:0.05px">The Walking Dead (2010) Season 5 Episode 16</div><div class="lbl b" style="left:272px;top:1413px;letter-spacing:-0.2px">Language</div><div class="lbl" style="left:272px;top:1432px;letter-spacing:-0.05px">English</div><div class="lbl b" style="left:272px;top:1450px;letter-spacing:0.1px">Contributor</div><div class="lbl" style="left:272px;top:1469px;color:#666;letter-spacing:0.45px">Anonymous</div>
<div class="poster" style="left:722px;top:876px"><svg width="100" height="150" viewBox="0 0 100 150">
<defs>
<linearGradient id="p5s" x1="0" y1="0" x2="0.3" y2="1"><stop offset="0" stop-color="#3a4646"/><stop offset=".15" stop-color="#7a8886"/><stop offset=".35" stop-color="#909c98"/><stop offset=".5" stop-color="#707c7a"/><stop offset=".62" stop-color="#5a6664"/><stop offset=".82" stop-color="#2e3636"/><stop offset="1" stop-color="#121616"/></linearGradient>
<filter id="p5b" x="-20%" y="-20%" width="140%" height="140%"><feGaussianBlur stdDeviation="3"/></filter>
<filter id="p5b1" x="-20%" y="-20%" width="140%" height="140%"><feGaussianBlur stdDeviation="1.2"/></filter>
<filter id="p5b2"><feGaussianBlur stdDeviation="0.6"/></filter>
</defs>
<rect width="100" height="150" fill="url(#p5s)"/>
<g filter="url(#p5b)">
<path d="M35 -5 H105 V38 Q75 24 50 30Z" fill="#1e2828" opacity=".8"/>
<ellipse cx="16" cy="30" rx="18" ry="24" fill="#c0ccc8" opacity=".55"/>
<ellipse cx="86" cy="42" rx="14" ry="10" fill="#c8ccb8" opacity=".45"/>
<rect x="-5" y="48" width="42" height="32" fill="#3a4644" opacity=".75"/>
<ellipse cx="50" cy="84" rx="60" ry="6" fill="#8a9694" opacity=".6"/>
</g>
<g filter="url(#p5b2)">
<path d="M42 13 Q46 10 49 14 L49 20 L53 24 L56 38 L57 46 L54 78 L50 78 L49 56 L46 78 L42 78 L43 44 L40 28Z" fill="#1a2020"/>
<path d="M71 40 Q74 39 75 42 L77 48 L76 70 L71 70 L70 48Z" fill="#3e4644"/>
</g>
<g filter="url(#p5b1)" opacity=".85">
<path d="M14 98 L50 90 L54 126 L20 132Z" fill="#8a9ca0"/>
<path d="M48 88 L88 78 L98 116 L56 126Z" fill="#a6b6b8"/>
<path d="M56 92 L84 85 M58 98 L86 91 M60 104 L88 97 M62 110 L90 103" stroke="#404a4c" stroke-width="1.4"/>
</g>
<rect x="8" y="126" width="48" height="7" fill="#c09228" filter="url(#p5b2)"/>
<rect x="9" y="136" width="13" height="6" fill="#d0c088"/>
<rect x="24" y="136" width="26" height="2.2" fill="#b8b8b8"/><rect x="24" y="140" width="22" height="2" fill="#b8b8b8"/>
</svg></div><div class="it-title" style="left:832px;top:886px;letter-spacing:0.05px">The Walking Dead (2010) Season 5 Episode 16</div><div class="lbl b" style="left:832px;top:918px;letter-spacing:-0.2px">Language</div><div class="lbl" style="left:832px;top:937px;letter-spacing:-0.05px">English</div><div class="lbl b" style="left:832px;top:955px;letter-spacing:0.1px">Contributor</div><div class="lbl" style="left:832px;top:974px;color:#4a66c8;letter-spacing:-0.1px">grzesiek11</div>
<div class="poster" style="left:722px;top:1041px"><svg width="100" height="150" viewBox="0 0 100 150">
<defs><filter id="p6b" x="-20%" y="-20%" width="140%" height="140%"><feGaussianBlur stdDeviation="3"/></filter><filter id="p6b1" x="-20%" y="-20%" width="140%" height="140%"><feGaussianBlur stdDeviation="1.3"/></filter><filter id="p6b2"><feGaussianBlur stdDeviation="0.6"/></filter></defs>
<rect width="100" height="150" fill="#080000"/>
<g fill="#c01010" filter="url(#p6b2)"><rect x="5" y="6" width="90" height="1.8"/><rect x="9" y="11" width="82" height="1.8"/><rect x="25" y="16" width="48" height="1.8"/></g>
<g filter="url(#p6b)">
<ellipse cx="64" cy="72" rx="34" ry="46" fill="#3a0303"/>
<path d="M44 28 Q60 32 72 52 Q84 72 92 94 L82 108 Q66 86 50 62Z" fill="#800808" opacity=".85"/>
<ellipse cx="84" cy="98" rx="14" ry="20" fill="#600606"/>
<ellipse cx="28" cy="70" rx="20" ry="30" fill="#1e0202"/>
<ellipse cx="40" cy="56" rx="8" ry="10" fill="#5a0505" opacity=".8"/>
</g>
<g filter="url(#p6b1)" fill="#e01414">
<path d="M68 24 L75 20 L71 50 L64 46Z" opacity=".8"/><path d="M74 62 L84 80 L80 83 L72 68Z" opacity=".85"/><path d="M46 30 L52 28 L50 46 L45 44Z" opacity=".6"/>
</g>
<g filter="url(#p6b2)" fill="#e01212">
<path d="M3 112 Q8 104 22 115 Q13 136 22 148 Q5 142 3 124Z"/>
<path d="M41 112 Q36 104 22 115 Q31 136 22 148 Q39 142 41 124Z"/>
</g>
<text x="22" y="110" font-family="Liberation Serif" font-style="italic" font-weight="bold" font-size="9" fill="#e02020" text-anchor="middle">Diet</text>
<g fill="#b01010"><rect x="44" y="122" width="50" height="1.6"/><rect x="46" y="126" width="44" height="1.6"/><rect x="54" y="134" width="28" height="1"/></g>
</svg></div><div class="it-title" style="left:832px;top:1051px;letter-spacing:-0.2px">Diet of Sex (2014)</div><div class="lbl b" style="left:832px;top:1083px;letter-spacing:-0.2px">Language</div><div class="lbl" style="left:832px;top:1102px;letter-spacing:-0.05px">English</div><div class="lbl b" style="left:832px;top:1120px;letter-spacing:0.1px">Contributor</div><div class="lbl" style="left:832px;top:1139px;color:#4a66c8;letter-spacing:-0.1px">chalma</div>
<div class="poster" style="left:722px;top:1206px"><svg width="100" height="150" viewBox="0 0 100 150">
<defs>
<linearGradient id="p7s" x1="0" y1="0" x2="0" y2="1"><stop offset="0" stop-color="#1e3650"/><stop offset=".2" stop-color="#2e5878"/><stop offset=".36" stop-color="#44749a"/><stop offset=".52" stop-color="#7a9ab0"/><stop offset=".6" stop-color="#a0b0b8"/><stop offset=".64" stop-color="#8a8468"/><stop offset=".7" stop-color="#9a8858"/><stop offset=".85" stop-color="#a88c5a"/><stop offset="1" stop-color="#6a5a3a"/></linearGradient>
<filter id="p7b" x="-20%" y="-20%" width="140%" height="140%"><feGaussianBlur stdDeviation="2.2"/></filter>
<filter id="p7b1"><feGaussianBlur stdDeviation="1"/></filter>
<filter id="p7b2"><feGaussianBlur stdDeviation="0.5"/></filter>
</defs>
<rect width="100" height="150" fill="url(#p7s)"/>
<rect x="12" y="11" width="76" height="1.2" fill="#c0c8d0" opacity=".7"/>
<g filter="url(#p7b)" fill="#e8eef2">
<ellipse cx="8" cy="62" rx="14" ry="9"/><ellipse cx="82" cy="56" rx="22" ry="9"/><ellipse cx="58" cy="68" rx="22" ry="6"/><ellipse cx="90" cy="74" rx="14" ry="6"/><ellipse cx="22" cy="78" rx="12" ry="5"/>
</g>
<g filter="url(#p7b2)">
<path d="M17 64 Q21 60 25 63 L28 68 L27 104 L23 104 L21 84 L20 104 L15 104 L14 74Z" fill="#2a2c28"/>
<rect x="29" y="62" width="11" height="28" rx="2" fill="#5e5844"/>
<rect x="38" y="88" width="2.4" height="18" fill="#3a3a30"/>
<rect x="31" y="88" width="5" height="16" fill="#d0d0c8"/>
</g>
<g filter="url(#p7b1)"><ellipse cx="68" cy="100" rx="12" ry="5" fill="#8a8a70"/></g>
<path d="M50 112 L82 106 L80 112 L50 116Z" fill="#d8b020" opacity=".9"/>
<text x="70" y="126" font-family="Liberation Serif" font-style="italic" font-weight="bold" font-size="12" fill="#c82020" text-anchor="middle">Saul</text>
<rect x="42" y="133" width="32" height="2" fill="#e0e0d8"/><rect x="42" y="137" width="32" height="2" fill="#e0e0d8"/>
<rect x="77" y="132" width="12" height="7" fill="#d8d0a0"/>
</svg></div><div class="it-title" style="left:832px;top:1216px;letter-spacing:0.05px">Better Call Saul (2015) Season 1 Episode 9</div><div class="lbl b" style="left:832px;top:1248px;letter-spacing:-0.2px">Language</div><div class="lbl" style="left:832px;top:1267px;letter-spacing:-0.05px">English</div><div class="lbl b" style="left:832px;top:1285px;letter-spacing:0.1px">Contributor</div><div class="lbl" style="left:832px;top:1304px;color:#4a66c8;letter-spacing:-0.1px">grzesiek11</div>
<div class="poster" style="left:722px;top:1371px"><svg width="100" height="150" viewBox="0 0 100 150">
<defs>
<filter id="p8b" x="-20%" y="-20%" width="140%" height="140%"><feGaussianBlur stdDeviation="2.4"/></filter>
<filter id="p8b1" x="-20%" y="-20%" width="140%" height="140%"><feGaussianBlur stdDeviation="1.2"/></filter>
<filter id="p8b2"><feGaussianBlur stdDeviation="0.5"/></filter>
<radialGradient id="p8f" cx=".45" cy=".5" r=".55"><stop offset="0" stop-color="#d8a058"/><stop offset=".6" stop-color="#b87838"/><stop offset="1" stop-color="#5a3410"/></radialGradient>
</defs>
<rect width="100" height="150" fill="#060403"/>
<g filter="url(#p8b)">
<rect x="-5" y="-5" width="110" height="66" fill="#3a2208"/>
<ellipse cx="50" cy="34" rx="28" ry="28" fill="url(#p8f)"/>
<ellipse cx="12" cy="38" rx="13" ry="18" fill="#a88048"/>
<path d="M10 -5 H95 Q90 8 70 10 Q50 6 30 12 Q15 14 10 -5Z" fill="#2a1606"/>
<path d="M64 26 Q82 22 105 30 L105 64 L52 64 Q60 50 64 26Z" fill="#0a0604"/>
<ellipse cx="50" cy="24" rx="10" ry="2.5" fill="#4a2a10"/>
</g>
<path d="M88 0 H94 L100 14 V26 Q92 14 88 0Z" fill="#e8dcb8" filter="url(#p8b1)"/>
<g fill="#d8d8d8"><rect x="31" y="72" width="3" height="2.6"/><rect x="36" y="72" width="3" height="2.6"/><rect x="41" y="72" width="3" height="2.6"/><rect x="46" y="72" width="3" height="2.6"/><rect x="51" y="72" width="3" height="2.6"/><rect x="56" y="72" width="3" height="2.6"/><rect x="61" y="72" width="3" height="2.6"/></g>
<rect x="30" y="62" width="36" height="1" fill="#606060"/>
<g filter="url(#p8b1)"><rect x="12" y="90" width="76" height="5" fill="#353535"/></g>
<g filter="url(#p8b1)"><rect x="-5" y="100" width="110" height="18" fill="#5a3812"/><rect x="-5" y="103" width="110" height="5" fill="#c09048"/><rect x="-5" y="110" width="110" height="3" fill="#8a5a20"/></g>
<g fill="#ece0c4" filter="url(#p8b2)"><rect x="10" y="123" width="4" height="25"/><rect x="23" y="123" width="4.5" height="25"/><rect x="37" y="123" width="4.5" height="25"/><rect x="49" y="123" width="4" height="25"/><rect x="63" y="123" width="4" height="25"/><rect x="76" y="123" width="4" height="25"/><rect x="90" y="123" width="4" height="25"/></g>
</svg></div><div class="it-title" style="left:832px;top:1381px;letter-spacing:0.15px">Blackhat (2015)</div><div class="lbl b" style="left:832px;top:1413px;letter-spacing:-0.2px">Language</div><div class="lbl" style="left:832px;top:1432px;letter-spacing:-0.05px">English</div><div class="lbl b" style="left:832px;top:1450px;letter-spacing:0.1px">Contributor</div><div class="lbl" style="left:832px;top:1469px;color:#666;letter-spacing:0.45px">Anonymous</div>
<div class="nav"></div>
<div class="abs" style="left:147px;top:627px;width:178px;height:60px;background:#fff"></div><div class="abs" style="left:167px;top:642px;width:32px;height:31px;border-radius:50%;border:1px solid #7a7a7a"></div><svg class="abs" style="left:175px;top:651px" width="16" height="14" viewBox="0 0 16 14"><path d="M8 1 L15.5 7.6 L14.6 8.6 L8 2.9 L1.4 8.6 L0.5 7.6Z" fill="#666"/><path d="M11.2 0.8h2.1v4.6l-2.1-1.8z" fill="#666"/><path d="M2.8 8.2 L8 3.8 L13.2 8.2 V13.6 H9.6 V10 H6.4 V13.6 H2.8Z" fill="#666"/></svg><div class="t" style="left:212px;top:650px;font-weight:bold;color:#666;font-size:13px;letter-spacing:0">Podnapisi.NET</div>
<div class="abs" style="left:335px;top:640px;width:36px;height:32px;background:#3d52a8"></div><div class="abs" style="left:371px;top:640px;width:302px;height:32px;background:#fff"></div><svg class="abs" style="left:347px;top:650px" width="12" height="14" viewBox="0 0 12 14"><path d="M0 0H7.6L12 4.4V14H0Z" fill="#fff"/><path d="M7.6 0V4.4H12" fill="#c9d0ec"/><path d="M2.6 7.2H9.4M2.6 9.2H9.4M2.6 11.2H9.4" stroke="#3d52a8" stroke-width="1"/></svg><svg class="abs" style="left:382px;top:650px" width="12" height="14" viewBox="0 0 12 14"><path d="M0.7 0.7H7.4L11.3 4.6V13.3H0.7Z" fill="none" stroke="#111" stroke-width="1.4"/><circle cx="3.6" cy="6.4" r="1.2" fill="#111"/><path d="M2 12 L5 8.6 L6.6 10 L8.4 7.8 L10.2 12Z" fill="#111"/></svg><svg class="abs" style="left:417px;top:651px" width="12" height="12" viewBox="0 0 12 12"><circle cx="2.4" cy="6" r="2.3" fill="#111"/><circle cx="9.6" cy="2.3" r="2.3" fill="#111"/><circle cx="9.6" cy="9.7" r="2.3" fill="#111"/><path d="M2.4 6 L9.6 2.3 M2.4 6 L9.6 9.7" stroke="#111" stroke-width="1.6"/></svg><div class="t" style="left:452px;top:649px;color:#999;font-size:15px;line-height:18px;letter-spacing:-0.25px">Search</div><svg class="abs" style="left:647px;top:651px" width="14" height="13" viewBox="0 0 14 13"><circle cx="5.6" cy="5.6" r="4.2" fill="none" stroke="#111" stroke-width="2.2"/><path d="M8.6 8.6 L12.6 12.2" stroke="#111" stroke-width="2.4" stroke-linecap="round"/></svg>
<div class="abs" style="left:703px;top:641px;width:32px;height:32px;border-radius:50%;border:1px solid rgba(255,255,255,.32)"></div><svg class="abs" style="left:711px;top:650px" width="15" height="17" viewBox="0 0 15 17"><path d="M0 0H9.6L15 5.4V17H0Z" fill="#fff"/><path d="M9.6 0V5.4H15" fill="#a8b8f0"/><path d="M3.4 9H11.6M3.4 11.3H11.6M3.4 13.6H11.6" stroke="#4f70e2" stroke-width="1.2"/></svg><div class="t" style="left:747px;top:651px;color:#f4f6ff;font-size:13.5px;line-height:16px">Subtitles</div><svg class="abs" style="left:807px;top:656px" width="9" height="5" viewBox="0 0 9 5"><path d="M0 0H9L4.5 5Z" fill="#f4f6ff"/></svg><div class="abs" style="left:839px;top:641px;width:32px;height:32px;border-radius:50%;border:1px solid rgba(255,255,255,.32)"></div><svg class="abs" style="left:848px;top:650px" width="15" height="17" viewBox="0 0 15 17"><path d="M0.8 0.8H9.4L14.2 5.6V16.2H0.8Z" fill="none" stroke="#fff" stroke-width="1.6"/><circle cx="4.6" cy="7.6" r="1.5" fill="#fff"/><path d="M2.6 14.4 L6.4 10.2 L8.2 11.8 L10.4 9.2 L12.6 14.4Z" fill="#fff"/></svg><div class="t" style="left:884px;top:651px;color:#f4f6ff;font-size:13.5px;line-height:16px;letter-spacing:-0.35px">Covers</div><svg class="abs" style="left:933px;top:656px" width="9" height="5" viewBox="0 0 9 5"><path d="M0 0H9L4.5 5Z" fill="#f4f6ff"/></svg><div class="abs" style="left:965px;top:641px;width:32px;height:32px;border-radius:50%;border:1px solid rgba(255,255,255,.32)"></div><svg class="abs" style="left:974px;top:650px" width="16" height="15" viewBox="0 0 16 15"><circle cx="3.2" cy="7.5" r="3" fill="#fff"/><circle cx="12.8" cy="3" r="3" fill="#fff"/><circle cx="12.8" cy="12" r="3" fill="#fff"/><path d="M3.2 7.5 L12.8 3 M3.2 7.5 L12.8 12" stroke="#fff" stroke-width="2"/></svg><div class="t" style="left:1010px;top:651px;color:#f4f6ff;font-size:13.5px;line-height:16px;letter-spacing:0.3px">Forum</div><svg class="abs" style="left:1058px;top:656px" width="9" height="5" viewBox="0 0 9 5"><path d="M0 0H9L4.5 5Z" fill="#f4f6ff"/></svg><svg class="abs" style="left:1193px;top:646px" width="21" height="22" viewBox="0 0 21 22"><path d="M6 4.6 A8 8 0 1 0 15 4.6" fill="none" stroke="#fff" stroke-width="3"/><path d="M10.5 0.5V10" stroke="#fff" stroke-width="3" stroke-linecap="round"/></svg><div class="t" style="left:1223px;top:651px;color:#f4f6ff;font-size:13.5px;line-height:16px">Login</div><svg class="abs" style="left:1264px;top:656px" width="9" height="5" viewBox="0 0 9 5"><path d="M0 0H9L4.5 5Z" fill="#f4f6ff"/></svg><div class="abs" style="left:0;top:1423px;width:1424px;height:1px;background:#000"></div>
</body></html>
